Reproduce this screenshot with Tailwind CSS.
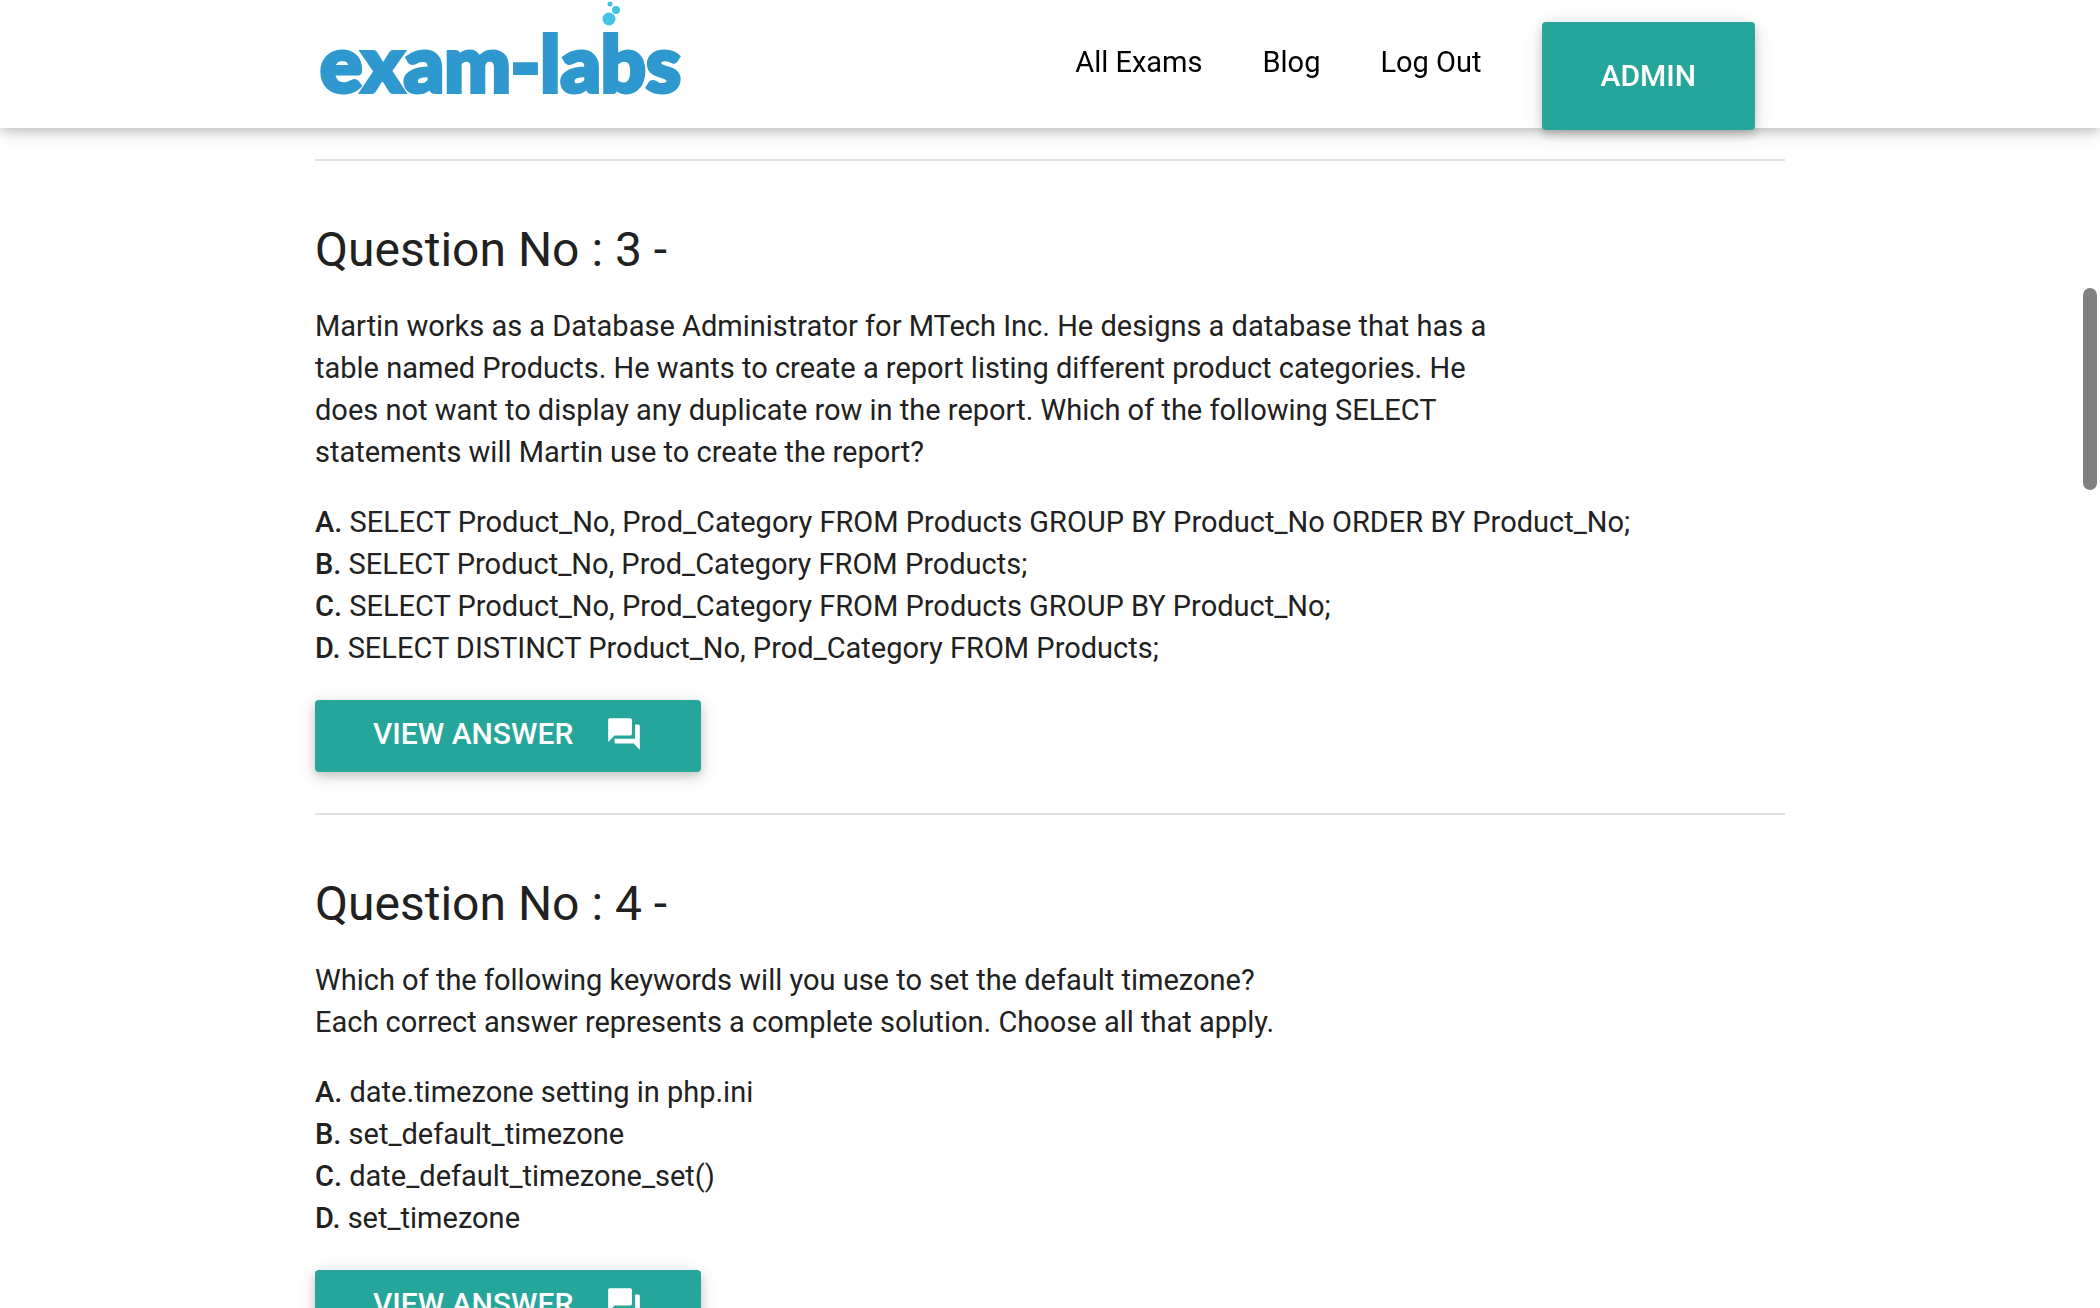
<!DOCTYPE html>
<html lang="en">
<head>
    <meta charset="UTF-8" />
    <meta name="viewport" content="width=device-width, initial-scale=1.0" />
    <title>Exam-Labs - Questions</title>

    <script src="https://cdn.jsdelivr.net/npm/@tailwindcss/browser@4"></script>
</head>
<body class="h-screen overflow-hidden bg-white font-['Roboto',sans-serif] text-[29px] leading-[42px] text-[#212121]">

<!-- Header -->
<header class="sticky top-0 z-50 h-32 bg-white shadow-[0_4px_10px_rgba(0,0,0,0.16),0_4px_20px_rgba(0,0,0,0.12)]">
    <div class="w-[70%] mx-auto flex justify-between items-start">
        <a href="/" aria-label="exam-labs">
            <svg class="block w-[370px] h-[110px]" viewBox="0 0 370 110">
                <text x="5" y="92" font-family="Lato, sans-serif" font-weight="900" font-size="79" fill="#2f98ce" stroke="#2f98ce" stroke-width="4">exam-labs</text>
                <g fill="#45c3e3">
                    <circle cx="294" cy="19" r="6.5" />
                    <circle cx="301" cy="10" r="4" />
                    <circle cx="295" cy="4" r="2.5" />
                </g>
            </svg>
        </a>
        <nav class="flex items-start text-black">
            <a href="/exams" class="px-[30px] leading-[124px]">All Exams</a>
            <a href="/blog" class="px-[30px] leading-[124px]">Blog</a>
            <a href="/logout" class="px-[30px] leading-[124px]">Log Out</a>
            <a href="/admin" class="mt-[22px] mx-[30px] px-[59px] text-[30px] leading-[108px] rounded-sm bg-[#26a69a] text-white font-medium uppercase shadow-[0_4px_10px_rgba(0,0,0,0.16),0_4px_20px_rgba(0,0,0,0.12)]">Admin</a>
        </nav>
    </div>
</header>

<!-- Questions -->
<main class="w-[70%] mx-auto pt-[31px]">
    <article class="border-t-2 border-[#e0e0e0] pt-[62px] pb-[41px]">
        <h2 class="text-[48px] leading-[54px] mb-7">Question No : 3 -</h2>
        <p class="w-4/5 mb-7">Martin works as a Database Administrator for MTech Inc. He designs a database that has a table named Products. He wants to create a report listing different product categories. He does not want to display any duplicate row in the report. Which of the following SELECT statements will Martin use to create the report?</p>
        <ul class="mb-[31px]">
            <li><b class="font-medium">A.</b> SELECT Product_No, Prod_Category FROM Products GROUP BY Product_No ORDER BY Product_No;</li>
            <li><b class="font-medium">B.</b> SELECT Product_No, Prod_Category FROM Products;</li>
            <li><b class="font-medium">C.</b> SELECT Product_No, Prod_Category FROM Products GROUP BY Product_No;</li>
            <li><b class="font-medium">D.</b> SELECT DISTINCT Product_No, Prod_Category FROM Products;</li>
        </ul>
        <button type="button" class="flex items-center gap-8 h-[72px] px-[58px] pb-1 text-[30px] rounded-sm bg-[#26a69a] text-white font-medium uppercase shadow-[0_4px_10px_rgba(0,0,0,0.16),0_4px_20px_rgba(0,0,0,0.12)]">
            View Answer
            <svg class="size-[38px]" viewBox="0 0 24 24" fill="currentColor"><path d="M21 6h-2v9H6v2c0 .55.45 1 1 1h11l4 4V7c0-.55-.45-1-1-1zm-4 6V3c0-.55-.45-1-1-1H3c-.55 0-1 .45-1 1v14l4-4h10c.55 0 1-.45 1-1z" /></svg>
        </button>
    </article>

    <article class="border-t-2 border-[#e0e0e0] pt-[62px] pb-[41px]">
        <h2 class="text-[48px] leading-[54px] mb-7">Question No : 4 -</h2>
        <p class="w-4/5 mb-7">Which of the following keywords will you use to set the default timezone?<br />Each correct answer represents a complete solution. Choose all that apply.</p>
        <ul class="mb-[31px]">
            <li><b class="font-medium">A.</b> date.timezone setting in php.ini</li>
            <li><b class="font-medium">B.</b> set_default_timezone</li>
            <li><b class="font-medium">C.</b> date_default_timezone_set()</li>
            <li><b class="font-medium">D.</b> set_timezone</li>
        </ul>
        <button type="button" class="flex items-center gap-8 h-[72px] px-[58px] pb-1 text-[30px] rounded-sm bg-[#26a69a] text-white font-medium uppercase shadow-[0_4px_10px_rgba(0,0,0,0.16),0_4px_20px_rgba(0,0,0,0.12)]">
            View Answer
            <svg class="size-[38px]" viewBox="0 0 24 24" fill="currentColor"><path d="M21 6h-2v9H6v2c0 .55.45 1 1 1h11l4 4V7c0-.55-.45-1-1-1zm-4 6V3c0-.55-.45-1-1-1H3c-.55 0-1 .45-1 1v14l4-4h10c.55 0 1-.45 1-1z" /></svg>
        </button>
    </article>
</main>

<!-- Scroll thumb -->
<div class="fixed top-[22%] right-[3px] w-3.5 h-[202px] rounded-full bg-[#808080]"></div>

</body>
</html>
